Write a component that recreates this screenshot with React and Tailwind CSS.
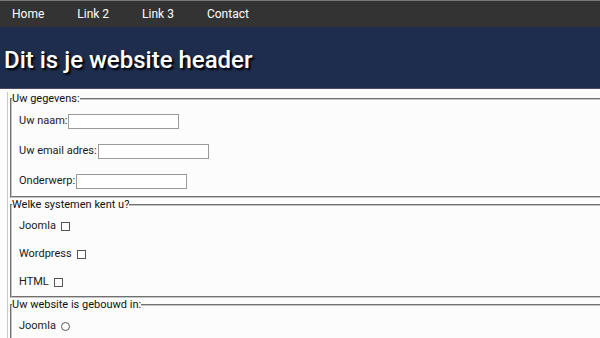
import React from 'react';

const font = { fontFamily: 'Roboto, "Noto Sans", Arial, sans-serif' };

const TextRow = ({ label, inputW = 'w-[111px]' }) => (
  <div className="flex items-center h-[30px] pl-[7px]">
    <label className="text-[11px] text-[#1a1a1a]">{label}</label>
    <input type="text" className={`ml-[1px] ${inputW} h-[15px] bg-white border border-[#9a9a9a]`} />
  </div>
);

const CheckRow = ({ label, type = 'checkbox' }) => (
  <div className="flex items-center h-[28px] pl-[7px]">
    <span className="text-[11px] text-[#1a1a1a]">{label}</span>
    {type === 'checkbox' ? (
      <span className="ml-[5px] w-[9px] h-[9px] border border-[#555] bg-white"></span>
    ) : (
      <span className="ml-[5px] w-[9px] h-[9px] border border-[#555] rounded-full bg-white"></span>
    )}
  </div>
);

const Fieldset = ({ legend, children }) => (
  <fieldset className="border-2 [border-style:groove] border-[#c4c4c4] border-r-0 m-0 p-0">
    <legend className="text-[11px] leading-[14px] text-[#111] p-0">{legend}</legend>
    {children}
  </fieldset>
);

export default function App() {
  return (
    <div className="w-[600px] h-[338px] overflow-hidden bg-[#fcfcfc]" style={font}>
      {/* menu */}
      <nav className="h-[27px] bg-[#333333] border-t border-[#777] flex items-center pl-[12px] gap-[33px] text-[12px] text-white">
        <a>Home</a>
        <a>Link 2</a>
        <a>Link 3</a>
        <a>Contact</a>
      </nav>

      {/* header */}
      <header className="h-[62px] bg-[#1e2d4e] border-b border-[#4a4a60] flex items-center pl-[4px]">
        <h1 className="text-[24px] font-medium text-white [text-shadow:2px_2px_2px_#000] leading-none pt-[4px]">
          Dit is je website header
        </h1>
      </header>

      {/* form */}
      <div className="pl-[7px] pt-[3px]">
        <div className="border-l border-[#c8c8c8] pl-[2px] h-[300px]">
          <Fieldset legend="Uw gegevens:">
            <TextRow label="Uw naam:" />
            <TextRow label="Uw email adres:" />
            <TextRow label="Onderwerp:" />
          </Fieldset>
          <Fieldset legend="Welke systemen kent u?">
            <CheckRow label="Joomla" />
            <CheckRow label="Wordpress" />
            <CheckRow label="HTML" />
          </Fieldset>
          <Fieldset legend="Uw website is gebouwd in:">
            <CheckRow label="Joomla" type="radio" />
          </Fieldset>
        </div>
      </div>
    </div>
  );
}
